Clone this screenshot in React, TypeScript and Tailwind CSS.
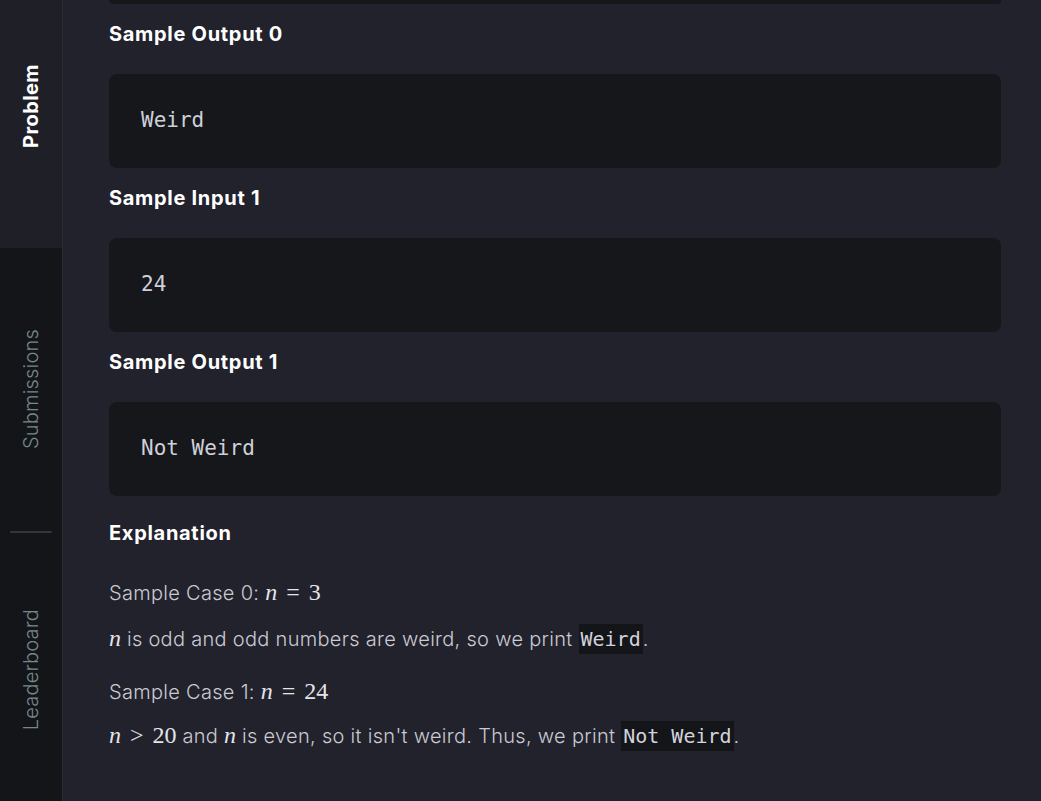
import React from 'react';

const sans = "font-['Inter','Noto_Sans',sans-serif]";
const mono = "font-['DejaVu_Sans_Mono','Liberation_Mono',monospace]";

// KaTeX-like inline math
const M: React.FC<{ children: React.ReactNode }> = ({ children }) => (
  <span className="font-['Liberation_Serif','DejaVu_Serif',serif] text-[24px] text-[#e4e5ea] tracking-normal">{children}</span>
);
const V: React.FC<{ children: React.ReactNode }> = ({ children }) => <i>{children}</i>;
const Op: React.FC<{ children: React.ReactNode }> = ({ children }) => <span className="mx-[9px]">{children}</span>;

const InlineCode: React.FC<{ children: React.ReactNode }> = ({ children }) => (
  <code className={`${mono} text-[20px] tracking-normal font-normal bg-[#141519] text-[#d2d3dc] px-[2px] py-[3px]`}>{children}</code>
);

const CodeBlock: React.FC<{ text: string }> = ({ text }) => (
  <pre className={`${mono} h-[94px] rounded-lg bg-[#16171b] px-8 flex items-center text-[21px] text-[#cfd0da]`}>{text}</pre>
);

const Heading: React.FC<{ children: React.ReactNode; className?: string }> = ({ children, className }) => (
  <h3 className={`text-[20px] leading-[28px] font-bold text-white tracking-[0.7px] ${className || ''}`}>{children}</h3>
);

const SideTab: React.FC<{ label: string; active?: boolean; className?: string }> = ({ label, active, className }) => (
  <div className={`flex justify-center ${className || ''}`}>
    <span
      className={`[writing-mode:vertical-rl] rotate-180 text-[20px] ${
        active ? 'font-bold text-white tracking-[0.4px]' : 'font-light text-[#74888a] tracking-[0.2px]'
      }`}
    >
      {label}
    </span>
  </div>
);

export default function App() {
  return (
    <div className={`${sans} flex h-[801px] w-[1041px] overflow-hidden bg-[#22222c]`}>
      {/* left tabs */}
      <aside className="flex w-[63px] shrink-0 flex-col bg-[#141519] border-r border-[#2a2b34]">
        <SideTab label="Problem" active className="h-[248px] shrink-0 bg-[#1e1f27] items-start pt-[64px]" />
        <SideTab label="Submissions" className="h-[283px] shrink-0 items-center" />
        <div className="mx-[10px] h-[2px] shrink-0 rounded bg-[#34353d]" />
        <SideTab label="Leaderboard" className="h-[274px] shrink-0 items-center" />
      </aside>

      {/* problem statement */}
      <main className="flex-1 pl-[46px] pr-[40px]">
        <div className="h-[4px] rounded-b-lg bg-[#16171b]" />

        <Heading className="mt-[16px] mb-[26px]">Sample Output 0</Heading>
        <CodeBlock text="Weird" />

        <Heading className="mt-[16px] mb-[26px]">Sample Input 1</Heading>
        <CodeBlock text="24" />

        <Heading className="mt-[16px] mb-[26px]">Sample Output 1</Heading>
        <CodeBlock text="Not Weird" />

        <Heading className="mt-[23px]">Explanation</Heading>

        <div className="text-[20px] leading-[28px] font-light text-[#c9cad2] tracking-[0.3px]">
          <p className="mt-[31px]">
            Sample Case 0: <M><V>n</V><Op>=</Op>3</M>
          </p>
          <p className="mt-[17px]">
            <M><V>n</V></M> is odd and odd numbers are weird, so we print <InlineCode>Weird</InlineCode>.
          </p>
          <p className="mt-[24px]">
            Sample Case 1: <M><V>n</V><Op>=</Op>24</M>
          </p>
          <p className="mt-[15px]">
            <M><V>n</V><Op>&gt;</Op>20</M> and <M><V>n</V></M> is even, so it isn't weird. Thus, we print{' '}
            <InlineCode>Not Weird</InlineCode>.
          </p>
        </div>
      </main>
    </div>
  );
}
